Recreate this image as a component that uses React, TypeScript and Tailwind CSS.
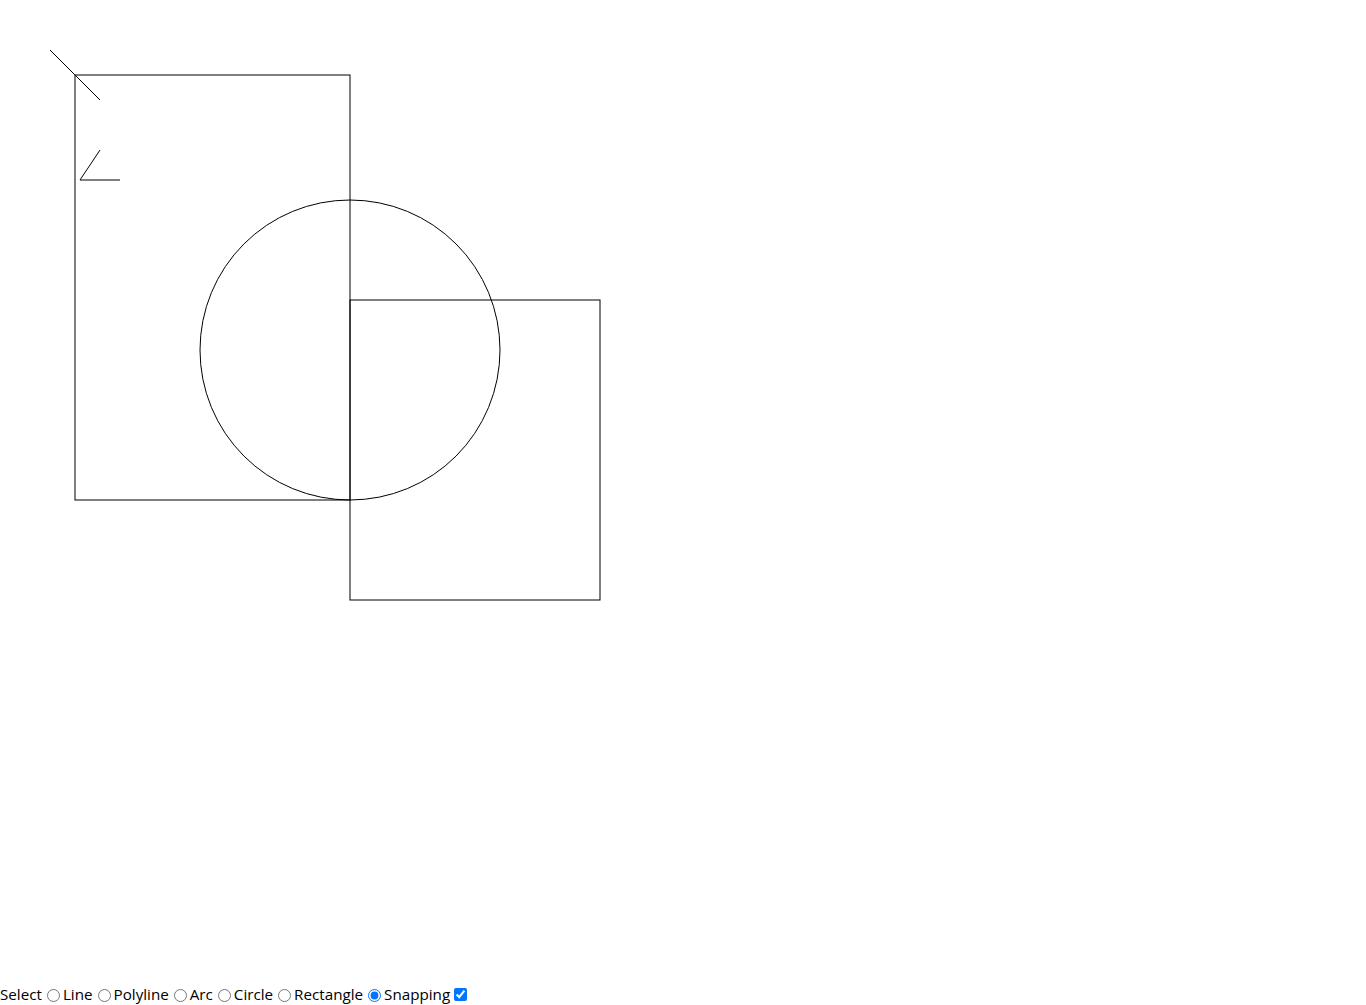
import React from "react";

const tools = ["Select", "Line", "Polyline", "Arc", "Circle", "Rectangle"];

export default function App() {
  return (
    <div className="bg-white text-black" style={{ fontFamily: '"Open Sans", "Noto Sans", sans-serif' }}>
      <svg width={1366} height={984} className="block">
        <g fill="none" stroke="#000" strokeWidth={1}>
          <line x1={50} y1={50} x2={100} y2={100} />
          <polyline points="100,150 80,180 120,180" />
          <rect x={75} y={75} width={275} height={425} />
          <circle cx={350} cy={350} r={150} />
          <rect x={350} y={300} width={250} height={300} />
        </g>
      </svg>
      <div className="flex items-center h-[21px] text-[15.2px] leading-[21px]">
        {tools.map((t) => (
          <React.Fragment key={t}>
            <span>{t}</span>
            <input type="radio" name="tool" defaultChecked={t === "Rectangle"} className="ml-[5px] mr-[3px] mt-[1px] w-[13px] h-[13px]" />
          </React.Fragment>
        ))}
        <span>Snapping</span>
        <input type="checkbox" defaultChecked className="ml-[4px] mr-[3px] mt-[-1px] w-[13px] h-[13px]" />
      </div>
    </div>
  );
}
